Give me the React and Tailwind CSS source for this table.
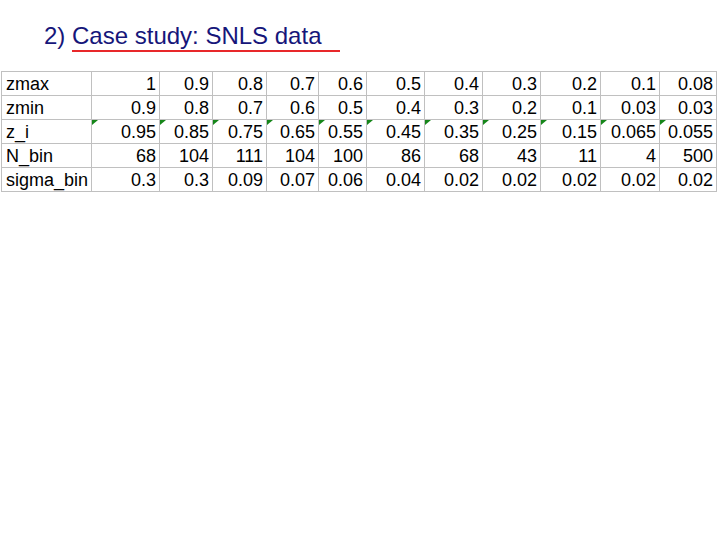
import React from "react";

const rows = [
  ["zmax", "1", "0.9", "0.8", "0.7", "0.6", "0.5", "0.4", "0.3", "0.2", "0.1", "0.08"],
  ["zmin", "0.9", "0.8", "0.7", "0.6", "0.5", "0.4", "0.3", "0.2", "0.1", "0.03", "0.03"],
  ["z_i", "0.95", "0.85", "0.75", "0.65", "0.55", "0.45", "0.35", "0.25", "0.15", "0.065", "0.055"],
  ["N_bin", "68", "104", "111", "104", "100", "86", "68", "43", "11", "4", "500"],
  ["sigma_bin", "0.3", "0.3", "0.09", "0.07", "0.06", "0.04", "0.02", "0.02", "0.02", "0.02", "0.02"],
];

export default function App() {
  return (
    <div
      className="w-[720px] h-[540px] bg-white overflow-hidden"
      style={{ fontFamily: '"Liberation Sans", Arial, sans-serif' }}
    >
      <div className="h-[51px] pt-[22px] pl-[44px] text-[24px] leading-[28px] text-[#16167a] whitespace-pre">
        <span>2) </span>
        <span className="inline-block leading-[23px] pb-[3px] border-solid border-b-2 border-b-[#e8282a] pr-[19px]">
          Case study: SNLS data
        </span>
      </div>
      <div className="mt-[20px] ml-px inline-grid grid-cols-[89px_67px_52px_53px_51px_47px_57px_57px_57px_59px_58px_56px] auto-rows-[23px] gap-px p-px bg-[#c0c0c0] text-[18px] text-black">
        {rows.map((row, ri) =>
          row.map((cell, ci) => (
            <div
              key={ri + "-" + ci}
              className={
                ci === 0
                  ? "relative bg-white flex items-center pl-[4px] leading-[20px]"
                  : "relative bg-white flex items-center justify-end pr-[3px] leading-[20px]"
              }
            >
              {ri === 2 && ci > 0 && (
                <span className="absolute left-0 top-0 w-0 h-0 border-t-[5px] border-t-[#16861a] border-r-[6px] border-r-transparent" />
              )}
              {cell}
            </div>
          ))
        )}
      </div>
    </div>
  );
}
